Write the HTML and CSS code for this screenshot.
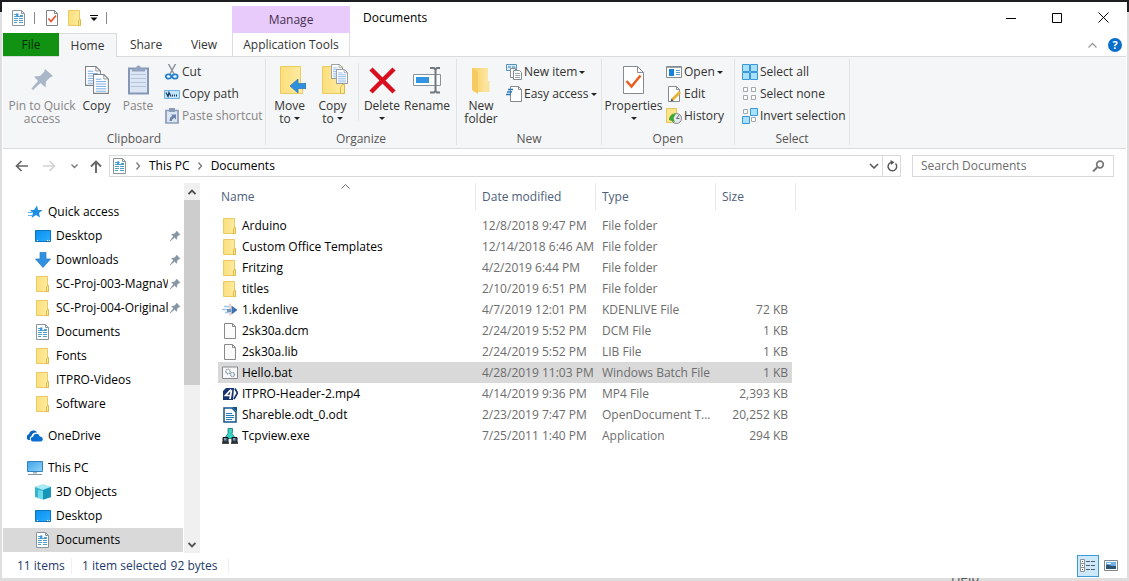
FILE: index.html
```html
<!DOCTYPE html>
<html lang="en">
<head>
<meta charset="utf-8">
<title>Documents</title>
<link rel="stylesheet" href="styles.css">
</head>
<body>
<svg class="defs" aria-hidden="true">
  <linearGradient id="gf" x1="0" x2="1"><stop offset="0" stop-color="#fbdf7c"/><stop offset="1" stop-color="#ffeba3"/></linearGradient>
  <linearGradient id="gn" x1="0" x2="1"><stop offset="0" stop-color="#f8cf60"/><stop offset="1" stop-color="#fdeab0"/></linearGradient>
  <linearGradient id="gd" x1="0" x2="1" y2="1"><stop offset="0" stop-color="#0a8ef0"/><stop offset="1" stop-color="#29b0ff"/></linearGradient>
  <linearGradient id="gp" x1="0" x2="1" y2="1"><stop offset="0" stop-color="#3fa2e8"/><stop offset="1" stop-color="#8fd4fb"/></linearGradient>
  <symbol id="folder" viewBox="-1 0 16 16"><path d="M.5 .5h11v9.500h1v5.500h-12z" fill="url(#gf)" stroke="#e9cb62"/><path d="M10.500 15.500v-4.500l1-1.500h1v6z" fill="#ffe88f" stroke="#dfb94a"/></symbol>
  <symbol id="doc" viewBox="-1 0 16 16"><path d="M.5 .5h9l3 3v12h-12z" fill="#fff" stroke="#8b949c"/><path d="M9.500 .5v3h3" fill="none" stroke="#8b949c"/><path d="M2 4.500h3m1-1v2m2 0h3M2 6.500h9M2 8.500h4m1 0h4M2 10.500h4m1 0h4M2 12.500h3m2 0h4" stroke="#4f9fc8"/><path d="M4 3.500h2v3H4z" fill="#3b9be0"/></symbol>
  <symbol id="file" viewBox="0 0 16 16"><path d="M2.500 .5h8l3 3v12h-11z" fill="#fbfbfb" stroke="#8a8a8a"/><path d="M10.500 .5v3h3" fill="none" stroke="#8a8a8a"/></symbol>
  <symbol id="desktop" viewBox="0 0 16 16"><path d="M.5 2.500h15v11H.5z" fill="url(#gd)" stroke="#0a73c4"/><path d="M2 12.500h1m9 0h1m1 0h1" stroke="#fff"/></symbol>
  <symbol id="pin" viewBox="0 0 12 12"><path d="M7.500 1 11 4.500 9.700 5 8 6.700 7.700 9.300 5.500 7.500 1 11 4.500 6.500 2.700 4.300 5.300 4 7 2.300z" fill="#8796a2" stroke="#8796a2" stroke-width=".6"/></symbol>
  <symbol id="page" viewBox="0 0 20 25"><path d="M.7.7h13l5.500 5.500v18H.7z" fill="#fff" stroke="#7b8187" stroke-width="1.300"/><path d="M13.500.7v5.500h5.500" fill="none" stroke="#7b8187"/><path d="M3.500 6.500h7M3.500 9.500h13M3.500 12.500h13M3.500 15.500h13M3.500 18.500h13M3.500 21.500h13" stroke="#5b98dc"/></symbol>
</svg>

<div class="desk">
<span class="desk-label">Help</span>
<div class="window">
  <header class="titlebar">
    <div class="quick">
      <svg class="i16" aria-hidden="true"><use href="#doc"/></svg>
      <span class="bar"></span>
      <button class="plain check" aria-label="Properties"><svg class="i16" viewBox="0 0 16 16"><path d="M2.500.5h8l3 3v12h-11z" fill="#fff" stroke="#7d8289"/><path d="M10.500.5v3h3" fill="none" stroke="#7d8289"/><path d="m4.500 8.500 2.500 3 5-6" fill="none" stroke="#e8532c" stroke-width="1.700"/></svg></button>
      <button class="plain" aria-label="New folder"><svg class="i16"><use href="#folder"/></svg></button>
      <button class="plain more" aria-label="Customize toolbar"><svg width="8" height="6" viewBox="0 0 8 6"><path d="M0 .5h8" stroke="#000"/><path d="M.5 2.500h7L4 6z"/></svg></button>
      <span class="bar"></span>
    </div>
    <button class="manage">Manage</button>
    <h1 class="title">Documents</h1>
    <div class="controls">
      <button aria-label="Minimize"><svg width="10" height="10"><path d="M0 5.500h10" stroke="#000"/></svg></button>
      <button aria-label="Maximize"><svg width="10" height="10"><path d="M.5.5h9v9h-9z" fill="none" stroke="#000"/></svg></button>
      <button aria-label="Close"><svg width="11" height="11"><path d="m.5.5 10 10m0-10-10 10" stroke="#000"/></svg></button>
    </div>
  </header>

  <nav class="tabs" aria-label="Ribbon tabs">
    <button class="tab file">File</button>
    <button class="tab home">Home</button>
    <button class="tab">Share</button>
    <button class="tab">View</button>
    <button class="tab app">Application Tools</button>
    <div class="tab-end">
      <button class="plain" aria-label="Collapse ribbon"><svg width="9" height="6"><path d="m.5 5.500 4-4 4 4" fill="none" stroke="#9a9a9a" stroke-width="1.300"/></svg></button>
      <button class="plain help" aria-label="Help">?</button>
    </div>
  </nav>

  <section class="ribbon" aria-label="Home">
    <div class="group clip">
      <div class="tools">
        <button class="big dim pinb"><svg class="i32" viewBox="0 0 32 32"><path d="m19 5 8 7-3 1.500-4 4-.5 6-5-4.500L7 26l-1.500-1.500 6.500-7.500-4-4.500 6-.500 4-4z" fill="#a9b7c9"/></svg><span>Pin to Quick<br>access</span></button>
        <button class="big copyb"><svg class="i32" viewBox="0 0 32 32"><use href="#page" x="4" y="2" width="16" height="20"/><use href="#page" x="12" y="10" width="16" height="20"/></svg><span>Copy</span></button>
        <button class="big dim pasteb"><svg class="i32" viewBox="0 0 32 32"><path d="M7 4.500h19v25H7z" fill="#dbe5f3" stroke="#8597b5" stroke-width="2"/><path d="M9 10.500h15M9 14.500h15M9 18.500h15M9 22.500h15" stroke="#b4c4dc"/><path d="M10 7.500v-3h4c0-4 5-4 5 0h4v3z" fill="#94a4bf"/></svg><span>Paste</span></button>
        <div class="stack">
          <button class="small"><svg class="i16" viewBox="0 0 16 16"><path d="m4.500 0 5.500 10M11.500 0 6 10" stroke="#8b929a" stroke-width="1.500"/><ellipse cx="4.500" cy="12.500" rx="2.700" ry="2.200" fill="none" stroke="#1f7fd1" stroke-width="1.700"/><ellipse cx="11" cy="12.500" rx="2.700" ry="2.200" fill="none" stroke="#1f7fd1" stroke-width="1.700"/></svg>Cut</button>
          <button class="small"><svg class="i16" viewBox="0 0 16 16"><path d="M.5 4.500h15v8H.5z" fill="#c3e4fa" stroke="#6fb2e6"/><path d="m2 6.500 2 4 1-4 2 4" fill="none" stroke="#173a5c" stroke-width="1.200"/><path d="M8 9.500h1m1 0h1m1 0h1" stroke="#173a5c" stroke-width="2"/></svg>Copy path</button>
          <button class="small dim"><svg class="i16" viewBox="0 0 16 16"><path d="M2 2.500h12V15H2z" fill="#dbe5f3" stroke="#8c9cb8" stroke-width="1.700"/><path d="M5 0h6v4H5z" fill="#8c9cb8"/><path d="M5.500 13c0-3 1-4.500 3-5L7 6.500h5v5l-1.500-1.500c-2 .5-2.500 1.500-2.500 3z" fill="#6d84ad"/></svg>Paste shortcut</button>
        </div>
      </div>
      <h2>Clipboard</h2>
    </div>
    <div class="group org">
      <div class="tools">
        <button class="big mv"><svg class="i32" viewBox="0 0 32 32"><path d="M6.500 2.500h20v21h2v6h-22z" fill="url(#gf)" stroke="#e9cb62"/><path d="m16 22 8-7v4.500h8v5h-8V29z" fill="#3090dd" stroke="#2276bd" stroke-width=".7"/></svg><span>Move<br>to <i class="car"></i></span></button>
        <button class="big mv"><svg class="i32" viewBox="0 0 32 32"><path d="M5.500 2.500h20v21h2v6h-22z" fill="url(#gf)" stroke="#e9cb62"/><path d="M23.500 29.500v-6l2-3h2v9z" fill="#ffe88f" stroke="#dfb94a"/><use href="#page" x="14" y="0" width="12" height="15"/><use href="#page" x="19" y="5" width="12" height="15"/></svg><span>Copy<br>to <i class="car"></i></span></button>
        <span class="split"></span>
        <button class="big del"><svg class="i32" viewBox="0 0 32 32"><path d="m5 5 23 23M28 5 5 28" stroke="#d90f1f" stroke-width="4.500"/></svg><span>Delete<br><i class="car"></i></span></button>
        <button class="big ren"><svg class="i32" viewBox="0 0 32 32"><path d="M2.500 10.500h27v11h-27z" fill="#fff" stroke="#8a9098"/><path d="M5 13h13v6H5z" fill="#3394e4"/><path d="M19 4h4l1.500 1.500L26 4h3M24.500 5v22M19 28.500h4l1.500-1.500 1.500 1.500h3" fill="none" stroke="#707880" stroke-width="2"/></svg><span>Rename</span></button>
      </div>
      <h2>Organize</h2>
    </div>
    <div class="group new">
      <div class="tools">
        <button class="big nf"><svg class="i32" viewBox="0 0 32 32"><path d="M7 4h16v17l2 7H9l-2-3z" fill="url(#gn)"/><path d="m7 4 6 4v22l-6-4z" fill="#f6cc62"/><path d="M23 17h1.500v11H20z" fill="#fae3a0"/></svg><span>New<br>folder</span></button>
        <div class="stack">
          <button class="small"><svg class="i16" viewBox="0 0 16 16"><path d="M.5.500h10v6H.5z" fill="#d6ecfa" stroke="#5b91b8"/><path d="M2 3h3m1 0h3" stroke="#3882b3"/><path d="M4.500 4.500h5v9h-5z" fill="#fff" stroke="#858b91"/><path d="M7.500 6.500h6l2 2v7h-8z" fill="#fff" stroke="#858b91"/><path d="M9 9.500h5M9 11.500h5M9 13.500h5" stroke="#9aa"/></svg>New item <i class="car"></i></button>
          <button class="small"><svg class="i16" viewBox="0 0 16 16"><path d="M4.500.5h8l3 3v12h-11z" fill="#fff" stroke="#858b91"/><path d="M12.500.5v3h3" fill="none" stroke="#858b91"/><path d="M2 3.500h5M1 6h5M0 8.500h5" stroke="#2a7ab8" stroke-width="1.300"/></svg>Easy access <i class="car"></i></button>
        </div>
      </div>
      <h2>New</h2>
    </div>
    <div class="group open">
      <div class="tools">
        <button class="big prop"><svg class="i32" viewBox="0 0 32 32"><path d="M5.500 2.500h14l6 6v21h-20z" fill="#fff" stroke="#858b91"/><path d="M19.500 2.500v6h6" fill="none" stroke="#858b91"/><path d="m8.500 17 5 5.500 9-11" fill="none" stroke="#ea6022" stroke-width="2.600"/></svg><span>Properties<br><i class="car"></i></span></button>
        <div class="stack">
          <button class="small"><svg class="i16" viewBox="0 0 16 16"><path d="M.5 2.500h15v11H.5z" fill="#fff" stroke="#858b91"/><path d="M1 3.500h14" stroke="#9ba1a7"/><path d="M3 5h5v7H3z" fill="#1683d8"/><path d="M10 6.500h4M10 8.500h4M10 10.500h4" stroke="#5c9ecc"/></svg>Open <i class="car"></i></button>
          <button class="small"><svg class="i16" viewBox="0 0 16 16"><path d="M2.500.5h8l3 3v12h-11z" fill="#fff" stroke="#858b91"/><path d="M10.500.5v3h3" fill="none" stroke="#858b91"/><path d="m6 14 8-8" stroke="#e7b437" stroke-width="3"/><path d="m4.500 15.500 1-3 2 2z" fill="#555"/></svg>Edit</button>
          <button class="small"><svg class="i16" viewBox="0 0 16 16"><path d="M.5.500h10v14H.5z" fill="#ffe589" stroke="#e5c65a"/><circle cx="10.500" cy="10.500" r="5" fill="#e4e8ea" stroke="#7f868c"/><path d="M10.500 10.500 13 7m-2.500 3.500h3" stroke="#65707a"/><path d="M3 12c0-4 3-7 7-6.500L8 9c-1 1 0 3 1 5z" fill="#3fa535"/></svg>History</button>
        </div>
      </div>
      <h2>Open</h2>
    </div>
    <div class="group sel">
      <div class="tools">
        <div class="stack">
          <button class="small"><svg class="i16" viewBox="0 0 16 16"><path d="M.5.5h7v7h-7zM8.500.5h7v7h-7zM.5 8.500h7v7h-7zM8.500 8.500h7v7h-7z" fill="#a9e0fc" stroke="#3c97d8"/></svg>Select all</button>
          <button class="small"><svg class="i16" viewBox="0 0 16 16"><path d="M1.500 1.500h4v4h-4zM9.500 1.500h4v4h-4zM1.500 9.500h4v4h-4zM9.500 9.500h4v4h-4z" fill="#fff" stroke="#a3a8ad"/></svg>Select none</button>
          <button class="small"><svg class="i16" viewBox="0 0 16 16"><path d="M1.500 1.500h4v4h-4zM9.500 9.500h4v4h-4z" fill="#fff" stroke="#a3a8ad"/><path d="M8.500.5h7v7h-7zM.5 8.500h7v7h-7z" fill="#a9e0fc" stroke="#3c97d8"/></svg>Invert selection</button>
        </div>
      </div>
      <h2>Select</h2>
    </div>
  </section>

  <div class="location">
    <div class="arrows">
      <button class="plain" aria-label="Back"><svg width="14" height="12"><path d="M13 6H1.500m5-5-5 5 5 5" fill="none" stroke="#666" stroke-width="1.700"/></svg></button>
      <button class="plain" aria-label="Forward"><svg width="14" height="12"><path d="M0 6h11.500m-5-5 5 5-5 5" fill="none" stroke="#d3d3d3" stroke-width="1.700"/></svg></button>
      <button class="plain" aria-label="Recent locations"><svg width="7" height="5"><path d="m.5.5 3 3 3-3" fill="none" stroke="#777" stroke-width="1.400"/></svg></button>
      <button class="plain up" aria-label="Up"><svg width="12" height="13"><path d="M6 13V1.500m-5 5 5-5 5 5" fill="none" stroke="#666" stroke-width="1.900"/></svg></button>
    </div>
    <div class="address">
      <svg class="i16" aria-hidden="true"><use href="#doc"/></svg>
      <svg class="sep" width="5" height="8"><path d="m.5.5 3 3.500-3 3.500" fill="none" stroke="#777" stroke-width="1.300"/></svg>
      <a href="#pc">This PC</a>
      <svg class="sep" width="5" height="8"><path d="m.5.5 3 3.500-3 3.500" fill="none" stroke="#777" stroke-width="1.300"/></svg>
      <a href="#documents">Documents</a>
      <button class="plain drop" aria-label="Previous locations"><svg width="10" height="6"><path d="m1 1 4 4 4-4" fill="none" stroke="#555" stroke-width="1.500"/></svg></button>
      <button class="plain refresh" aria-label="Refresh"><svg width="12" height="12" viewBox="0 0 12 12"><path d="M9.500 3.500A4.300 4.300 0 1 1 5 2.400" fill="none" stroke="#555" stroke-width="1.400"/><path d="M4.500 0 8.500 2.200 5 5z" fill="#555"/></svg></button>
    </div>
    <label class="search"><input type="text" placeholder="Search Documents" aria-label="Search Documents"><svg width="13" height="12" viewBox="0 0 13 12"><circle cx="8" cy="4.500" r="3.300" fill="none" stroke="#777" stroke-width="1.700"/><path d="M5.500 7 1 11.500" stroke="#777" stroke-width="2"/></svg></label>
  </div>

  <main class="content">
    <nav class="tree" aria-label="Folders">
      <ul>
        <li class="root"><a href="#quick"><svg class="i16" viewBox="0 0 16 16"><path d="m10 1.500 1 4.500h4.500L12 9l1 4.500L9 11l-4.500 3L6 9 3 6h4z" fill="#1e8fe0"/><path d="M1 8.500h4M1 11.500h4" stroke="#5ab2ee"/></svg><span>Quick access</span></a></li>
        <li><a href="#desktop"><svg class="i16"><use href="#desktop"/></svg><span>Desktop</span></a><svg class="pin"><use href="#pin"/></svg></li>
        <li><a href="#downloads"><svg class="i16" viewBox="0 0 16 16"><path d="M5 .5h6v6.500h4.500L8 15.500.5 7H5z" fill="#2f91e0" stroke="#2279c2" stroke-width=".7"/></svg><span>Downloads</span></a><svg class="pin"><use href="#pin"/></svg></li>
        <li><a href="#p3"><svg class="i16"><use href="#folder"/></svg><span>SC-Proj-003-MagnaW</span></a><svg class="pin"><use href="#pin"/></svg></li>
        <li><a href="#p4"><svg class="i16"><use href="#folder"/></svg><span>SC-Proj-004-Original</span></a><svg class="pin"><use href="#pin"/></svg></li>
        <li><a href="#documents"><svg class="i16"><use href="#doc"/></svg><span>Documents</span></a></li>
        <li><a href="#fonts"><svg class="i16"><use href="#folder"/></svg><span>Fonts</span></a></li>
        <li><a href="#videos"><svg class="i16"><use href="#folder"/></svg><span>ITPRO-Videos</span></a></li>
        <li><a href="#software"><svg class="i16"><use href="#folder"/></svg><span>Software</span></a></li>
        <li class="root gap"><a href="#onedrive"><svg class="i16" viewBox="0 0 16 16"><path d="M1.500 12a3 3 0 0 1 .5-5.700C2.300 2.500 8 1 10 4.500c-3-.5-5 1-5.500 3.500C3 8.500 2.500 10.500 3 12z" fill="#0a64bd"/><path d="M6 13.500c-3 0-3-4.500.2-4.700C6.500 5 12 4.500 12.700 8.500c4 0 4 5 .8 5z" fill="#0a6fd0"/></svg><span>OneDrive</span></a></li>
        <li class="root gap"><a href="#pc"><svg class="i16" viewBox="0 0 16 16"><path d="M.5 1.500h15v10H.5z" fill="url(#gp)" stroke="#3483bd"/><path d="M6 12h4v1.500H6z" fill="#9cb2c2"/><path d="M1 14.500h14" stroke="#7d98ab"/></svg><span>This PC</span></a></li>
        <li><a href="#objects"><svg class="i16" viewBox="0 0 16 16"><path d="m0 3 8-2.500L16 3v10l-7 2.500L0 13z" fill="#35b5cf"/><path d="m0 3 8-2.500L16 3 8 6z" fill="#a7edf3"/><path d="m3 6 5 1v8.500L3 14z" fill="#6ed8e6"/><path d="m8 6 8-3v10l-8 2.500z" fill="#1596ba"/></svg><span>3D Objects</span></a></li>
        <li><a href="#desktop"><svg class="i16"><use href="#desktop"/></svg><span>Desktop</span></a></li>
        <li class="on"><a href="#documents"><svg class="i16"><use href="#doc"/></svg><span>Documents</span></a></li>
      </ul>
    </nav>
    <div class="scroll">
      <button class="plain" aria-label="Scroll up"><svg width="8" height="6"><path d="m.5 5 3.500-3.500L7.500 5" fill="none" stroke="#505050" stroke-width="1.800"/></svg></button>
      <div class="track"><div class="thumb"></div></div>
      <button class="plain" aria-label="Scroll down"><svg width="8" height="6"><path d="m.5 1 3.500 3.500L7.500 1" fill="none" stroke="#505050" stroke-width="1.800"/></svg></button>
    </div>
    <div class="list">
      <table>
        <colgroup><col class="c-name"><col class="c-mid"><col class="c-mid"><col class="c-size"><col class="c-end"></colgroup>
        <thead><tr>
          <th><button>Name</button><svg class="sort" width="9" height="5"><path d="m.5 4.500 4-4 4 4" fill="none" stroke="#6a6a6a"/></svg></th><th><button>Date modified</button></th><th><button>Type</button></th><th><button>Size</button></th><th class="end"><div></div></th>
        </tr></thead>
        <tbody>
          <tr><td><svg class="i16"><use href="#folder"/></svg>Arduino</td><td>12/8/2018 9:47 PM</td><td>File folder</td><td></td></tr>
          <tr><td><svg class="i16"><use href="#folder"/></svg>Custom Office Templates</td><td>12/14/2018 6:46 AM</td><td>File folder</td><td></td></tr>
          <tr><td><svg class="i16"><use href="#folder"/></svg>Fritzing</td><td>4/2/2019 6:44 PM</td><td>File folder</td><td></td></tr>
          <tr><td><svg class="i16"><use href="#folder"/></svg>titles</td><td>2/10/2019 6:51 PM</td><td>File folder</td><td></td></tr>
          <tr><td><svg class="i16" viewBox="0 0 16 16"><path d="M2 4.500h5M0 7.500h5M3 10.500h4" stroke="#9cc6ea" stroke-width="1.600"/><path d="M8 1.500v12" stroke="#e0a79f"/><path d="M9.500 3.500 15.500 8l-6 4.500z" fill="#3c70b0"/><path d="M5 7h4v3H5z" fill="#7396be"/></svg>1.kdenlive</td><td>4/7/2019 12:01 PM</td><td>KDENLIVE File</td><td>72 KB</td></tr>
          <tr><td><svg class="i16"><use href="#file"/></svg>2sk30a.dcm</td><td>2/24/2019 5:52 PM</td><td>DCM File</td><td>1 KB</td></tr>
          <tr><td><svg class="i16"><use href="#file"/></svg>2sk30a.lib</td><td>2/24/2019 5:52 PM</td><td>LIB File</td><td>1 KB</td></tr>
          <tr class="on"><td><svg class="i16" viewBox="0 0 16 16"><path d="M.5 2h15v11.500H.5z" fill="#f6f8f9" stroke="#85898d"/><circle cx="6" cy="6.500" r="2.200" fill="none" stroke="#8a99a6" stroke-dasharray="1 .5" stroke-width="1.400"/><circle cx="10.500" cy="9.500" r="2" fill="none" stroke="#8a99a6" stroke-dasharray="1 .5" stroke-width="1.400"/></svg>Hello.bat</td><td>4/28/2019 11:03 PM</td><td>Windows Batch File</td><td>1 KB</td></tr>
          <tr><td><svg class="i16" viewBox="0 0 16 16"><path d="M4 2h8l-1 12H1V5z" fill="#16356e"/><path d="M9 3.500 3.500 9.500h6M9.500 4 8 13" fill="none" stroke="#fff" stroke-width="1.700"/><path d="M13 2.500 15.500 7 12 13" fill="none" stroke="#16356e" stroke-width="1.700"/></svg>ITPRO-Header-2.mp4</td><td>4/14/2019 9:36 PM</td><td>MP4 File</td><td>2,393 KB</td></tr>
          <tr><td><svg class="i16" viewBox="0 0 16 16"><path d="M2 1h8l4 4v10H2z" fill="#fff" stroke="#12548a" stroke-width="1.500"/><path d="M10 0h5v5z" fill="#12548a"/><path d="M4 6.500h6M4 8.500h8M4 10.500h8M4 12.500h6" stroke="#277bb5"/></svg>Shareble.odt_0.odt</td><td>2/23/2019 7:47 PM</td><td>OpenDocument T...</td><td>20,252 KB</td></tr>
          <tr><td><svg class="i16" viewBox="0 0 16 16"><path d="M6 .5h4.500v3L10 5.500l3.500 5h-11L6 5.500z" fill="#35d5c5" stroke="#196f70" stroke-width=".8"/><path d="M1 9.500h5v4.500H1zM10 9.500h5v4.500h-5z" fill="#49627e" stroke="#111"/><path d="M2 11h2m7 0h2" stroke="#b7d6f2"/><path d="M0 15h7m2 0h7" stroke="#111" stroke-width="1.600"/></svg>Tcpview.exe</td><td>7/25/2011 1:40 PM</td><td>Application</td><td>294 KB</td></tr>
        </tbody>
      </table>
    </div>
  </main>

  <footer class="status">
    <span class="count">11 items</span>
    <span class="picked">1 item selected</span><span class="bytes">92 bytes</span>
    <div class="views">
      <button class="active" aria-label="Details view"><svg width="18" height="14"><path d="M1.500.500h4v4h-4zM1.500 4.500h4v4h-4zM1.500 8.500h4v4h-4z" fill="#fff" stroke="#8a9298"/><path d="M3 2.500h1M3 6.500h1M3 10.500h1M7 2.500h4m1 0h4M7 6.500h4m1 0h4M7 10.500h4m1 0h4" stroke="#50606c"/></svg></button>
      <button aria-label="Thumbnail view"><svg width="14" height="12"><path d="M.5.500h13v10H.5z" fill="#fff" stroke="#7f868c"/><path d="M2 2h10v7H2z" fill="#73b2e8"/><path d="M2 5c3-1 4 1 10 1v3H2z" fill="#2c5575"/><path d="M3 3.500h4" stroke="#fff"/></svg></button>
    </div>
  </footer>
</div>
</div>
</body>
</html>
```
FILE: styles.css
```css
* { box-sizing: border-box; }
html, body { height: 100%; }
body { margin: 0; overflow: hidden; font: 12px/16px "Open Sans", "Noto Sans", sans-serif; color: #000; }
button, input { font: inherit; color: inherit; margin: 0; padding: 0; border: 0; background: none; }
a { color: inherit; text-decoration: none; }
h1, h2 { margin: 0; font-size: 12px; font-weight: 400; }
ul { margin: 0; padding: 0; list-style: none; }
svg { display: block; flex: none; }
.defs { position: absolute; width: 0; height: 0; }
.i16 { width: 16px; height: 16px; }
.i32 { width: 32px; height: 32px; }
.plain { display: flex; align-items: center; justify-content: center; }
.car { display: inline-block; border: 3px solid transparent; border-top-color: #222; border-bottom: 0; vertical-align: 3px; }

.desk { position: relative; height: 100vh; padding: 2px 2px 3px; background: linear-gradient(#1d1e22 12px, #dedede 12px); }
.desk-label { position: absolute; left: 951px; bottom: -4px; color: #555; font-size: 13px; }
.window { position: relative; display: flex; flex-direction: column; height: 100%; padding: 0 1px; background: #fff; }

.titlebar { display: flex; height: 31px; flex: none; }
.quick { display: flex; align-items: center; width: 229px; padding-left: 8px; gap: 7px; }
.quick .check { margin-left: 2px; }
.quick .more { margin-right: 1px; }
.bar { width: 1px; height: 12px; background: #8a8a8a; }
.manage { width: 118px; margin-top: 4px; background: #e8cbfb; color: #46304f; }
.title { flex: 1; padding: 8px 13px; }
.controls { display: flex; }
.controls button { display: flex; align-items: center; justify-content: center; width: 46px; }

.tabs { display: flex; height: 24px; flex: none; border-bottom: 1px solid #dadbdc; color: #333; }
.tab { width: 58px; }
.file { width: 56px; background: #119212; color: #052b05; }
.home { height: 24px; background: #f5f6f7; border: 1px solid #dadbdc; border-bottom: 0; border-left: 0; }
.app { width: 118px; margin-left: -1px; border: 1px solid #e3d8e8; border-width: 0 1px; }
.tab-end { display: flex; align-items: center; gap: 11px; margin-left: auto; padding-right: 4px; }
.help { width: 14px; height: 14px; border-radius: 50%; background: #0a6fcb; color: #fff; font-size: 11px; font-weight: 700; line-height: 14px; }

.ribbon { display: flex; height: 92px; flex: none; background: #f5f6f7; border-bottom: 1px solid #dadbdc; color: #333; }
.group { display: flex; flex-direction: column; margin: 2px 0 3px; border-right: 1px solid #e2e3e4; }
.group h2 { text-align: center; line-height: 12px; color: #555; }
.tools { display: flex; flex: 1; padding-top: 2px; }
.clip { width: 263px; }
.org { width: 191px; }
.new { width: 145px; }
.open { width: 133px; }
.sel { width: 115px; }
.big { display: flex; flex-direction: column; align-items: center; padding-top: 3px; line-height: 13px; white-space: nowrap; }
.big span { margin-top: 3px; }
.dim { color: #858585; }
.pinb { width: 78px; }
.copyb { width: 31px; }
.pasteb { width: 52px; }
.mv { width: 43px; }
.mv:first-child { margin-left: 2px; }
.split { width: 1px; height: 58px; margin: 2px 3px 0 4px; background: #e2e3e4; }
.del { width: 40px; }
.ren { width: 50px; }
.nf { width: 48px; }
.prop { width: 63px; }
.stack { display: flex; flex-direction: column; white-space: nowrap; }
.small { display: flex; align-items: center; gap: 2px; height: 22px; }
.sel .stack { padding-left: 7px; }
.open .stack, .new .stack { padding-left: 1px; }

.location { display: flex; align-items: center; height: 34px; flex: none; padding-right: 12px; }
.arrows { display: flex; align-items: center; width: 106px; padding-left: 12px; gap: 14px; }
.arrows .up { margin-left: -2px; }
.address { display: flex; align-items: center; flex: 1; height: 22px; padding-left: 2px; margin-right: 11px; border: 1px solid #d9d9d9; }
.address .sep { margin: 0 8px; }
.drop { width: 16px; margin-left: auto; height: 20px; }
.refresh { width: 18px; height: 20px; border-left: 1px solid #d9d9d9; }
.search { display: flex; align-items: center; width: 202px; height: 22px; padding: 0 8px; border: 1px solid #d9d9d9; }
.search input { flex: 1; min-width: 0; outline: 0; }
.search input::placeholder { color: #6d6d6d; opacity: 1; }

.content { display: flex; flex: 1; min-height: 0; }
.tree { width: 181px; padding-top: 17px; overflow: hidden; }
.tree li { display: flex; align-items: center; height: 24px; width: 180px; padding: 0 2px 0 32px; }
.tree .root { padding-left: 24px; }
.tree .gap { margin-top: 8px; }
.tree a { display: flex; align-items: center; gap: 5px; flex: 1; min-width: 0; overflow: hidden; white-space: nowrap; }
.tree span { overflow: hidden; }
.tree .on { background: #d9d9d9; }
.pin { width: 12px; height: 12px; margin-left: 1px; }
.scroll { display: flex; flex-direction: column; width: 16px; background: #f0f0f0; }
.scroll button { height: 17px; }
.track { flex: 1; }
.thumb { height: 55%; background: #cdcdcd; }

.list { flex: 1; padding-left: 18px; }
table { width: 578px; table-layout: fixed; border-collapse: collapse; }
.c-name { width: 257px; }
.c-mid { width: 120px; }
.c-size { width: 77px; }
.c-end { width: 4px; }
th { position: relative; height: 32px; padding: 0; font-weight: 400; vertical-align: top; }
th button { display: block; width: 100%; height: 27px; padding: 0 6px; border-left: 1px solid #e5e5e5; text-align: left; color: #4c607a; }
th:first-child button { border: 0; padding-left: 3px; }
th.end div { height: 27px; border-right: 1px solid #e5e5e5; }
.sort { position: absolute; left: 48%; top: 1px; }
td { height: 21px; padding: 0 0 0 7px; line-height: 20px; white-space: nowrap; color: #6d6d6d; }
td:first-child { display: flex; align-items: center; gap: 4px; padding-left: 4px; color: #000; }
td:last-child { padding-right: 4px; text-align: right; }
.on td { background: #d9d9d9; }

.status { display: flex; align-items: center; height: 25px; flex: none; padding-left: 14px; color: #1e3a6b; }
.count { width: 55px; border-right: 1px solid #f0f0f0; }
.picked { margin-left: 10px; }
.bytes { margin-left: 4px; padding-right: 10px; border-right: 1px solid #f0f0f0; }
.views { display: flex; align-items: center; margin-left: auto; gap: 1px; padding-right: 4px; }
.views button { display: flex; align-items: center; justify-content: center; width: 22px; height: 22px; }
.views .active { background: #cde8f8; border: 1px solid #3c9bd6; }
```
